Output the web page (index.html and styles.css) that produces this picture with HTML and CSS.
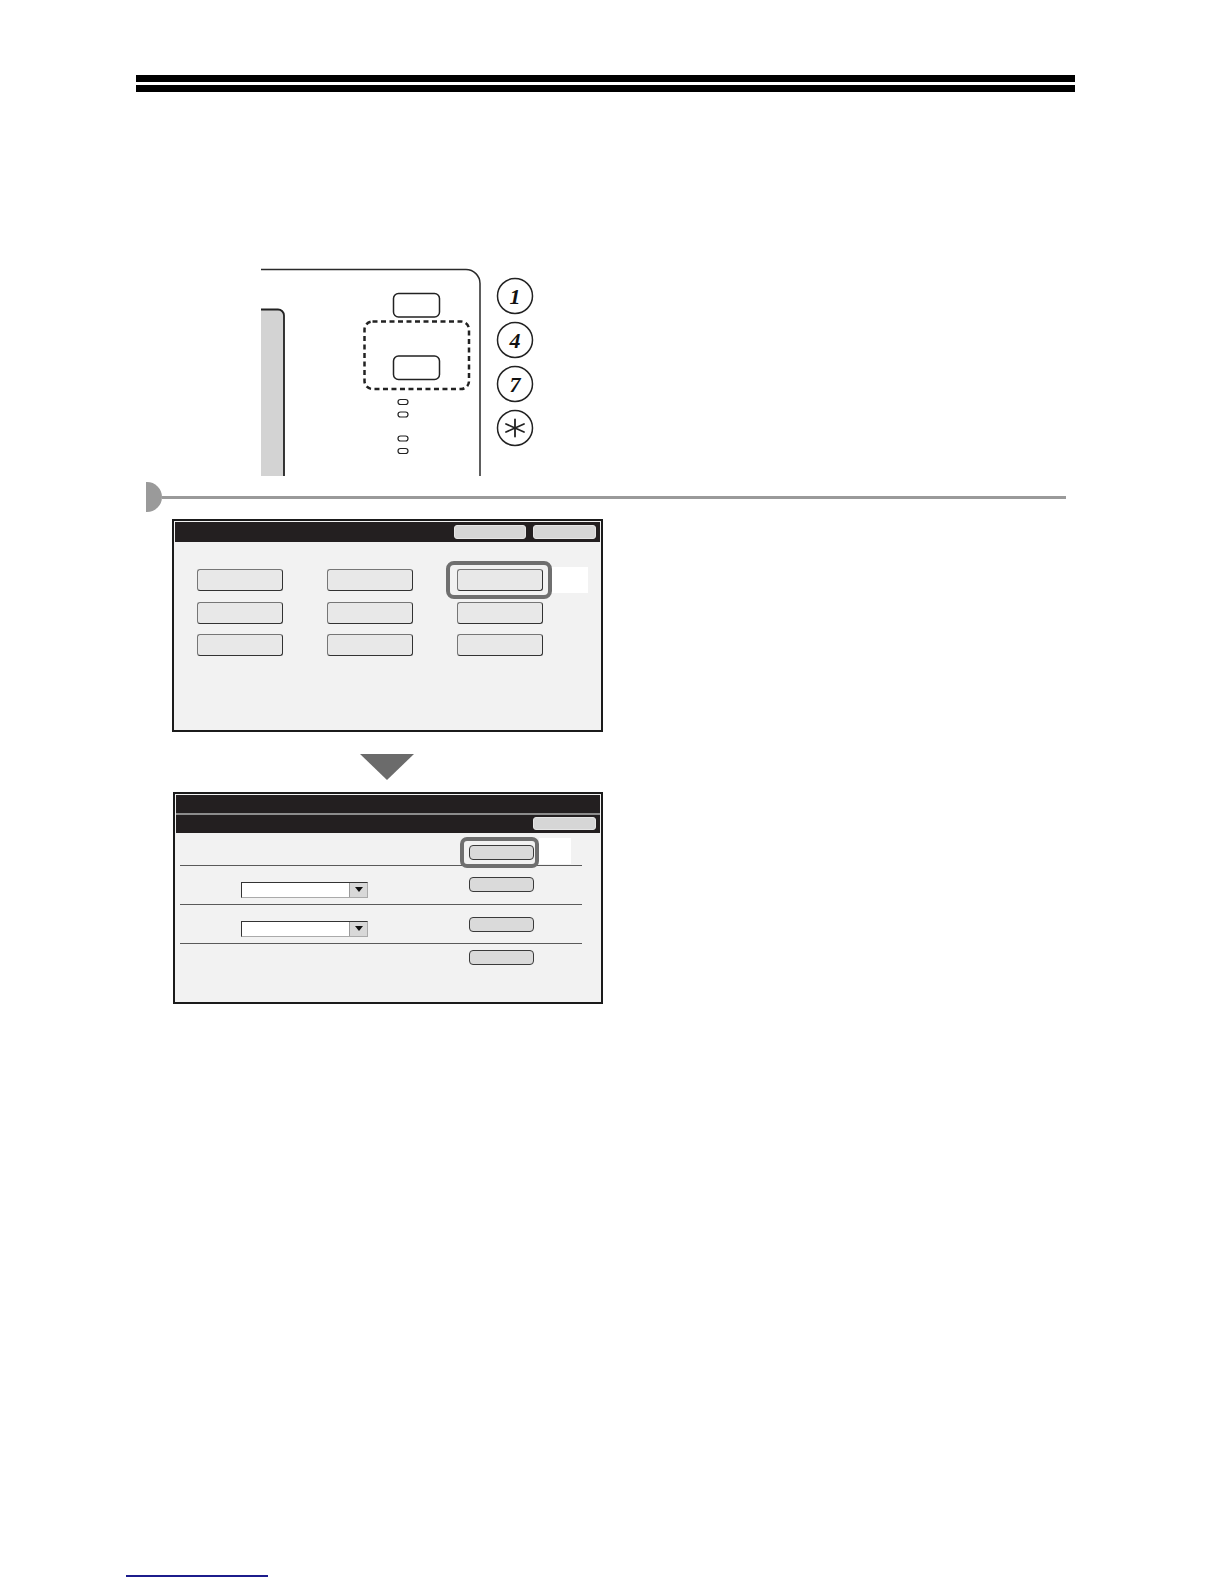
FILE: index.html
```html
<!DOCTYPE html>
<html lang="en">
<head>
<meta charset="utf-8">
<title>Panel settings</title>
<link rel="stylesheet" href="styles.css">
</head>
<body>
<div class="page">
  <div class="title-rule">
    <div class="bar"></div>
    <div class="bar"></div>
  </div>

  <svg class="keypad" viewBox="0 0 300 220" width="300" height="220" xmlns="http://www.w3.org/2000/svg">
    <path d="M11 9.5 H216 A14 14 0 0 1 230 23.5 V216" fill="none" stroke="#2a2a2a" stroke-width="1.5"/>
    <path d="M11 216 V49.5 H28 A6 6 0 0 1 34 55.5 V216 Z" fill="#d3d3d3"/>
    <path d="M11 49.5 H28 A6 6 0 0 1 34 55.5 V216" fill="none" stroke="#222" stroke-width="1.8"/>
    <rect x="143.5" y="33.5" width="46" height="23.5" rx="5" fill="#fff" stroke="#222" stroke-width="1.5"/>
    <rect x="114.5" y="61.5" width="104.5" height="67.5" rx="8" fill="none" stroke="#222" stroke-width="2.5" stroke-dasharray="5 3.5"/>
    <rect x="143.5" y="96" width="46" height="23.5" rx="5" fill="#fff" stroke="#222" stroke-width="1.5"/>
    <rect x="148" y="139.5" width="10" height="5" rx="2.5" fill="#fff" stroke="#222" stroke-width="1.2"/>
    <rect x="148" y="152" width="10" height="5" rx="2.5" fill="#fff" stroke="#222" stroke-width="1.2"/>
    <rect x="148" y="176" width="10" height="5" rx="2.5" fill="#fff" stroke="#222" stroke-width="1.2"/>
    <rect x="148" y="188.5" width="10" height="5" rx="2.5" fill="#fff" stroke="#222" stroke-width="1.2"/>
    <g fill="#fff" stroke="#222" stroke-width="1.5">
      <circle cx="265" cy="36" r="17.5"/>
      <circle cx="265" cy="80" r="17.5"/>
      <circle cx="265" cy="124" r="17.5"/>
      <circle cx="265" cy="168" r="17.5"/>
    </g>
    <g class="key-digit" text-anchor="middle">
      <text x="265" y="43.5">1</text>
      <text x="265" y="87.5">4</text>
      <text x="265" y="131.5">7</text>
    </g>
    <g stroke="#222" stroke-width="1.8" stroke-linecap="round">
      <line x1="265" y1="159.5" x2="265" y2="176.5"/>
      <line x1="256" y1="164" x2="274" y2="172"/>
      <line x1="256" y1="172" x2="274" y2="164"/>
    </g>
  </svg>

  <div class="step">
    <div class="step-knob"></div>
    <div class="step-line"></div>
  </div>

  <div class="screen screen-1">
    <div class="hdr">
      <div class="hbtn hbtn-a"></div>
      <div class="hbtn hbtn-b"></div>
    </div>
    <div class="menu-grid">
      <div class="mbtn"></div>
      <div class="mbtn"></div>
      <div class="mbtn mbtn-picked"><span class="mask mask-1"></span><span class="mark mark-1"></span></div>
      <div class="mbtn"></div>
      <div class="mbtn"></div>
      <div class="mbtn"></div>
      <div class="mbtn"></div>
      <div class="mbtn"></div>
      <div class="mbtn"></div>
    </div>
  </div>

  <div class="arrow-down"></div>

  <div class="screen screen-2">
    <div class="hdr-title"></div>
    <div class="hdr-sep"></div>
    <div class="hdr-2">
      <div class="hbtn hbtn-b"></div>
    </div>
    <div class="rows">
      <div class="row row-1">
        <div class="sbtn sbtn-1"><span class="mask mask-2"></span><span class="mark mark-2"></span></div>
      </div>
      <div class="row row-2">
        <div class="dd"><div class="dd-arrow"><span class="caret"></span></div></div>
        <div class="sbtn sbtn-2"></div>
      </div>
      <div class="row row-3">
        <div class="dd"><div class="dd-arrow"><span class="caret"></span></div></div>
        <div class="sbtn sbtn-3"></div>
      </div>
      <div class="row row-4">
        <div class="sbtn sbtn-4"></div>
      </div>
    </div>
  </div>

  <div class="footer-link"></div>
</div>
</body>
</html>
```
FILE: styles.css
```css
* { box-sizing: border-box; }
html, body { margin: 0; padding: 0; background: #fff; }
body { font-family: "Liberation Sans", Arial, sans-serif; }

.page {
  width: 1224px;
  height: 1584px;
  overflow: hidden;
  padding-top: 75px;
}

.title-rule { margin-left: 136px; width: 939px; }
.title-rule .bar { height: 7px; background: #000; }
.title-rule .bar + .bar { margin-top: 3px; }

.keypad { display: block; margin: 168px 0 0 250px; width: 300px; height: 220px; }
.key-digit { font-family: "Liberation Serif", "DejaVu Serif", serif; font-style: italic; font-weight: bold; font-size: 22px; fill: #111; }

.step { display: flex; align-items: center; margin: 2px 0 0 146px; height: 30px; }
.step-knob { width: 16px; height: 30px; background: #9a9a9a; border-radius: 0 15px 15px 0; }
.step-line { width: 904px; height: 3px; background: #9a9a9a; }

.screen {
  border: 2px solid #1b1b1b;
  padding: 1px;
  background: #f2f2f2;
}
.screen-1 { margin: 7px 0 0 172px; width: 431px; height: 213px; }
.screen-2 { margin: 12px 0 0 173px; width: 430px; height: 212px; }

.hdr {
  background: #231f20;
  height: 20px;
  display: flex;
  justify-content: flex-end;
  align-items: flex-start;
  gap: 7px;
  padding: 3px 4px 0 0;
}
.hbtn { height: 13.5px; background: #d6d6d6; border: 1px solid #e6e6e6; border-radius: 3px; }
.hbtn-a { width: 72px; }
.hbtn-b { width: 63px; }

.menu-grid {
  display: grid;
  grid-template-columns: repeat(3, 86px);
  grid-auto-rows: 22px;
  column-gap: 44px;
  row-gap: 10.5px;
  margin: 27px 0 0 22px;
}
.mbtn {
  position: relative;
  background: #e8e8e8;
  border: 1px solid #767676;
  border-right-color: #333;
  border-bottom-color: #333;
  border-radius: 3px;
}

.mask { position: absolute; background: #fff; z-index: 1; }
.mark { position: absolute; border: 4.5px solid #6f6f6f; z-index: 2; }
.mask-1 { left: 93px; top: -3px; width: 37px; height: 26px; }
.mark-1 { left: -12px; right: -10px; top: -9px; bottom: -9px; border-radius: 8px; }

.arrow-down {
  width: 0;
  height: 0;
  margin: 22px 0 0 360px;
  border-left: 27px solid transparent;
  border-right: 27px solid transparent;
  border-top: 26px solid #6b6b6b;
}

.hdr-title { background: #231f20; height: 18px; }
.hdr-sep { background: #8c8c8c; height: 2px; }
.hdr-2 {
  background: #231f20;
  height: 18px;
  display: flex;
  justify-content: flex-end;
  align-items: flex-start;
  padding: 2px 4px 0 0;
}
.hdr-2 .hbtn { height: 13px; }

.rows { padding-left: 4px; }
.row {
  display: flex;
  align-items: flex-start;
  width: 402px;
  border-bottom: 1px solid #5a5a5a;
}
.row-1 { height: 33px; }
.row-2, .row-3 { height: 39px; }
.row-4 { border-bottom: none; height: 40px; }

.sbtn {
  position: relative;
  width: 65px;
  height: 15px;
  margin-left: auto;
  margin-right: 48px;
  background: #dadada;
  border: 1px solid #3a3a3a;
  border-radius: 4px;
}
.sbtn-1 { margin-top: 12px; }
.sbtn-2 { margin-top: 11px; }
.sbtn-3 { margin-top: 12px; }
.sbtn-4 { margin-top: 5.5px; }

.mask-2 { left: 69px; top: -8px; width: 32px; height: 26px; }
.mark-2 { left: -10px; right: -6px; top: -9px; bottom: -8.5px; border-radius: 7px; }

.dd {
  display: flex;
  width: 127px;
  height: 15.5px;
  margin: 16px 0 0 61px;
  background: #fff;
  border: 1px solid #333;
  border-right-color: #aaa;
  border-bottom-color: #aaa;
}
.dd-arrow {
  margin-left: auto;
  width: 18px;
  background: #d8d8d8;
  border-left: 1px solid #9a9a9a;
  display: flex;
  align-items: center;
  justify-content: center;
}
.caret {
  width: 0;
  height: 0;
  border-left: 4px solid transparent;
  border-right: 4px solid transparent;
  border-top: 5px solid #111;
}

.footer-link { margin: 571px 0 0 126px; width: 142px; height: 1.5px; background: #1c1c8c; }
```
